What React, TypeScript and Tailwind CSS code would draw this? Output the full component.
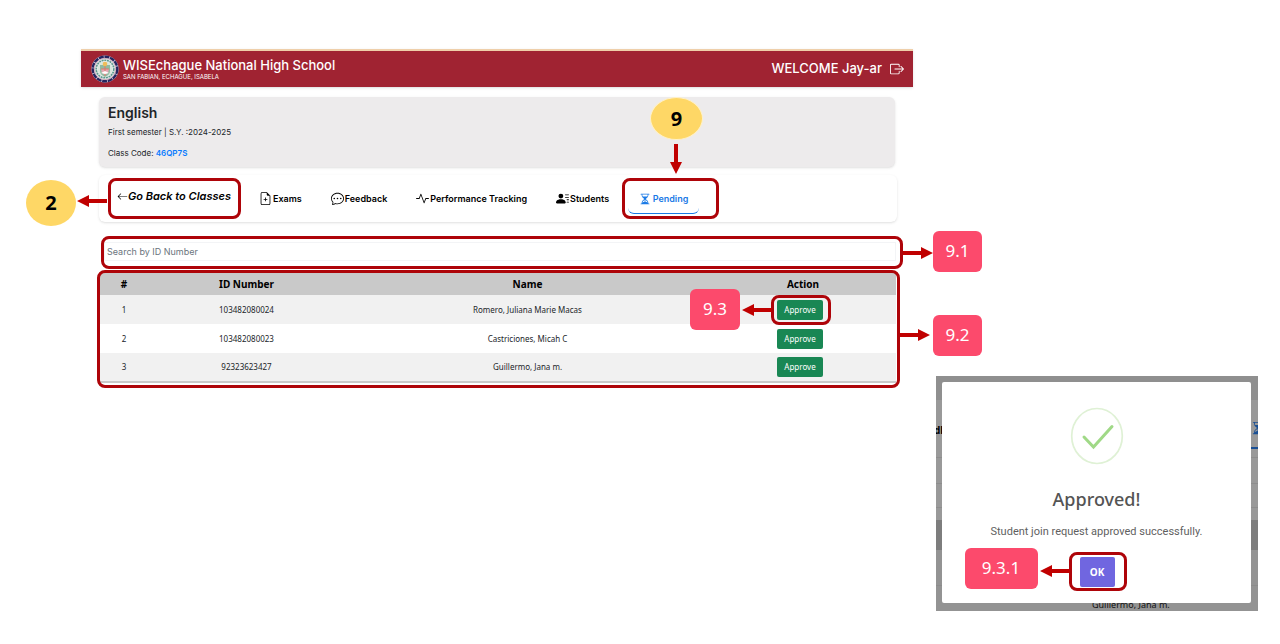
import type { ReactNode } from "react";
import {
  BsActivity,
  BsArrowLeft,
  BsBoxArrowRight,
  BsChatDots,
  BsFileEarmarkPlus,
  BsHourglassSplit,
  BsPersonLinesFill,
} from "react-icons/bs";

const students = [
  { id: "103482080024", name: "Romero, Juliana Marie Macas" },
  { id: "103482080023", name: "Castriciones, Micah C" },
  { id: "92323623427", name: "Guillermo, Jana m." },
];

const tabs = [
  { label: "Exams", icon: <BsFileEarmarkPlus className="size-[13px]" /> },
  { label: "Feedback", icon: <BsChatDots className="size-[13px]" /> },
  { label: "Performance Tracking", icon: <BsActivity className="size-[13px]" /> },
  { label: "Students", icon: <BsPersonLinesFill className="size-[13px]" /> },
];

function Frame({ className }: { className: string }) {
  return <span className={`pointer-events-none absolute rounded-lg border-3 border-[#ae0409] ${className}`} />;
}

function Arrow({ className, length, turn = "" }: { className: string; length: number; turn?: string }) {
  return (
    <svg
      aria-hidden="true"
      className={`pointer-events-none absolute ${turn} ${className}`}
      width={length}
      height="12"
      viewBox={`0 0 ${length} 12`}
      fill="#c00000"
    >
      <path d={`M0 4H${length - 12}V0L${length} 6L${length - 12} 12V8H0Z`} />
    </svg>
  );
}

function Tag({ className, children }: { className: string; children: ReactNode }) {
  return (
    <span
      className={`absolute flex h-[41px] items-center justify-center rounded-md bg-[#fc4a6c] pb-px font-['Noto_Sans',sans-serif] text-[17px] text-white ${className}`}
    >
      {children}
    </span>
  );
}

function Bubble({ className, children }: { className: string; children: ReactNode }) {
  return (
    <span
      className={`absolute flex items-center justify-center rounded-[50%] bg-[#fed766] font-['Noto_Sans',sans-serif] text-xl font-bold text-black ${className}`}
    >
      {children}
    </span>
  );
}

function Seal() {
  return (
    <svg viewBox="0 0 28 28" className="size-7 shrink-0" role="img" aria-label="School seal">
      <circle cx="14" cy="14" r="13.6" fill="#dcd6e2" />
      <circle cx="14" cy="14" r="12.3" fill="none" stroke="#25265f" strokeWidth="2.4" strokeDasharray="5 .7" />
      <circle cx="14" cy="14" r="10.6" fill="#e9edf0" stroke="#c58a9c" strokeWidth="0.6" />
      <circle cx="14" cy="14" r="8.8" fill="none" stroke="#5d9a8b" strokeWidth="1.6" strokeDasharray="2 .7" />
      <circle cx="14" cy="14" r="7.4" fill="#d8e7dc" />
      <path d="M9 10h10v6c0 3-2 4-5 6-3-2-5-3-5-6z" fill="#8fbaa1" />
      <path d="M10 14h8l-1 4-3 2-3-2z" fill="#e6a7b5" />
      <path d="M14 7v14M10 14h8" stroke="#d97a6a" strokeWidth="1" />
      <circle cx="14" cy="9" r="2.3" fill="#efbd59" />
      <path d="M10 18l4-2 4 2-4 1z" fill="#fff" />
    </svg>
  );
}

function ClassPage() {
  return (
    <section className="ml-[81px] w-[65%] shrink-0">
      <header className="flex h-[38px] items-center border-t-2 border-[#efcfaa] bg-[#a02332] pr-[9px] pb-px pl-[10px] text-white shadow-sm">
        <Seal />
        <div className="ml-1 flex-1">
          <h1 className="text-[13px] leading-4 font-medium">WISEchague National High School</h1>
          <p className="text-[6px] leading-2">SAN FABIAN, ECHAGUE, ISABELA</p>
        </div>
        <span className="text-[13px] font-medium">WELCOME Jay-ar</span>
        <button aria-label="Log out" className="ml-2">
          <BsBoxArrowRight className="size-[14px]" />
        </button>
      </header>

      <div className="mr-[10px] ml-4">
        <div className="mt-[10px] mr-2 ml-0.5 h-[70px] rounded-md bg-[#edebec] px-[9px] pt-1.5 text-[#212529] shadow">
          <h2 className="text-sm leading-5 font-semibold">English</h2>
          <p className="mt-[3px] text-[8px] leading-3">First semester | S.Y. :2024-2025</p>
          <p className="mt-[9px] text-[8px] leading-3">
            Class Code: <span className="font-semibold text-[#0a7cff]">46QP7S</span>
          </p>
        </div>

        <nav className="mt-2 mr-1.5 ml-0.5 flex h-[47px] items-center rounded-md bg-white pl-[9px] text-[9px] font-semibold text-black shadow">
          <div className="relative flex h-[41px] w-[133px] shrink-0 items-center pb-1 pl-[9px]">
            <a href="#classes" className="flex items-center text-[11px] whitespace-nowrap italic">
              <BsArrowLeft className="size-[11px]" />
              Go Back to Classes
            </a>
            <Frame className="inset-0" />
            <Arrow className="top-[17px] right-[134px]" length={30} turn="rotate-180" />
            <Bubble className="top-[2px] right-[165px] h-[46px] w-[50px]">2</Bubble>
          </div>
          <div className="ml-[18px] flex flex-1 items-center gap-[29px]">
            {tabs.map((tab) => (
              <a key={tab.label} href="#tab" className="flex items-center gap-px whitespace-nowrap">
                {tab.icon}
                {tab.label}
              </a>
            ))}
          </div>
          <div className="relative mr-[178px] h-[41px] w-[97px] shrink-0 px-1.5">
            <a
              href="#pending"
              className="flex h-9 w-[71px] items-center justify-center gap-0.5 rounded-md border-b border-[#1a7ae6] pt-1.5 text-[#1a7ae6]"
            >
              <BsHourglassSplit className="size-3" />
              Pending
            </a>
            <Frame className="inset-0" />
            <Arrow className="top-[-25px] left-[39px]" length={30} turn="rotate-90" />
            <Bubble className="top-[-81px] left-[28px] h-[43px] w-[53px] border border-[#fff1c8]">9</Bubble>
          </div>
        </nav>

        <div className="relative mt-[14px] ml-1 h-[33px] pt-1.5 pr-[7px] pl-[3px]">
          <input
            type="search"
            aria-label="Search by ID Number"
            placeholder="Search by ID Number"
            className="block h-[19px] w-full border border-gray-100 pl-0.5 text-[9px] outline-none placeholder:text-[#6c757d]"
          />
          <Frame className="inset-0" />
          <Arrow className="top-[11px] left-full" length={30} />
          <Tag className="top-[-5px] left-[calc(100%+30px)] w-[49px]">9.1</Tag>
        </div>

        <div className="relative mt-px mr-[3px] h-[118px] py-[3px] pr-1 pl-[3px]">
          <table className="w-full table-fixed border-b-2 border-[#c9c9c9] text-center font-['Noto_Sans',sans-serif] text-[8px] text-[#212529]">
            <colgroup>
              <col className="w-12" />
              <col className="w-[197px]" />
              <col />
              <col className="w-[186px]" />
            </colgroup>
            <thead className="h-[22px] bg-[#c9c9c9] text-[10px] text-black">
              <tr>
                <th>#</th>
                <th>ID Number</th>
                <th>Name</th>
                <th>Action</th>
              </tr>
            </thead>
            <tbody>
              {students.map((student, index) => (
                <tr key={student.id} className="h-[29px] odd:bg-[#f1f1f1]">
                  <td>{index + 1}</td>
                  <td>{student.id}</td>
                  <td>{student.name}</td>
                  <td className="pr-1.5">
                    <div className="relative mx-auto h-5 w-[46px]">
                      <button className="block size-full rounded-xs bg-[#198754] text-white">Approve</button>
                      {index === 0 && (
                        <>
                          <Frame className="-top-[5px] -right-2 -bottom-[5px] -left-1.5" />
                          <Arrow className="top-1 right-[51px]" length={30} turn="rotate-180" />
                          <Tag className="top-[-11px] right-[83px] w-[50px]">9.3</Tag>
                        </>
                      )}
                    </div>
                  </td>
                </tr>
              ))}
            </tbody>
          </table>
          <Frame className="inset-0" />
          <Arrow className="top-[59px] left-full" length={30} />
          <Tag className="top-[45px] left-[calc(100%+33px)] w-[49px]">9.2</Tag>
        </div>
      </div>
    </section>
  );
}

function ApprovedDialog() {
  return (
    <aside className="relative mt-[327px] mr-[22px] ml-[23px] h-[235px] flex-1 overflow-hidden bg-[#999999] pt-1.5 pr-[7px] pl-1.5 font-['Noto_Sans',sans-serif]">
      <div aria-hidden="true" className="absolute inset-0 flex flex-col">
        <div className="h-6 bg-[#8f8f8f]" />
        <div className="flex h-[58px] items-center justify-between border-b border-[#8d8d8d]">
          <span className="-ml-0.5 pt-1 text-[10px] font-bold">db</span>
          <span className="-mr-2 flex h-10 w-[15px] items-center border-b-2 border-[#194f94] text-[#194f94]">
            <BsHourglassSplit className="size-[14px]" />
          </span>
        </div>
        <div className="h-[26px] border-b border-[#8d8d8d]" />
        <div className="h-6 border-b border-[#8d8d8d]" />
        <div className="mt-3 h-[30px] bg-[#7d7d7d]" />
        <div className="h-9 border-b border-[#8b8b8b] bg-[#939393]" />
        <div className="flex flex-1 items-end bg-[#939393] pl-[156px] text-[9px] leading-3 text-[#111111]">Guillermo, Jana m.</div>
      </div>
      <div role="dialog" aria-label="Approved!" className="relative flex h-[221px] flex-col items-center rounded-xs bg-white pt-[25px]">
        <svg aria-hidden="true" width="54" height="58" viewBox="0 0 54 58" fill="none">
          <ellipse cx="27" cy="29" rx="25.3" ry="27.5" stroke="#dff1d5" strokeWidth="1.7" />
          <path d="M14 30L23.5 40L42 19.5" stroke="#a0d987" strokeWidth="3" strokeLinecap="round" />
        </svg>
        <h2 className="mt-5 text-lg leading-7 font-medium text-[#545454]">Approved!</h2>
        <p className="mt-[11px] font-[Roboto,sans-serif] text-[11px] leading-4 text-[#5f5f5f]">
          Student join request approved successfully.
        </p>
        <div className="relative mt-3 ml-0.5 h-[39px] w-[58px] px-[11px] py-[5px]">
          <button className="block h-[30px] w-[35px] rounded-xs bg-[#7066e0] text-[10px] font-bold text-white">OK</button>
          <Frame className="inset-0" />
          <Arrow className="top-[13px] right-[57px]" length={30} turn="rotate-180" />
          <Tag className="top-[-4px] right-[89px] w-[73px]">9.3.1</Tag>
        </div>
      </div>
    </aside>
  );
}

export default function App() {
  return (
    <main className="flex min-h-screen items-start bg-white pt-[49px] font-[Inter,sans-serif]">
      <ClassPage />
      <ApprovedDialog />
    </main>
  );
}
